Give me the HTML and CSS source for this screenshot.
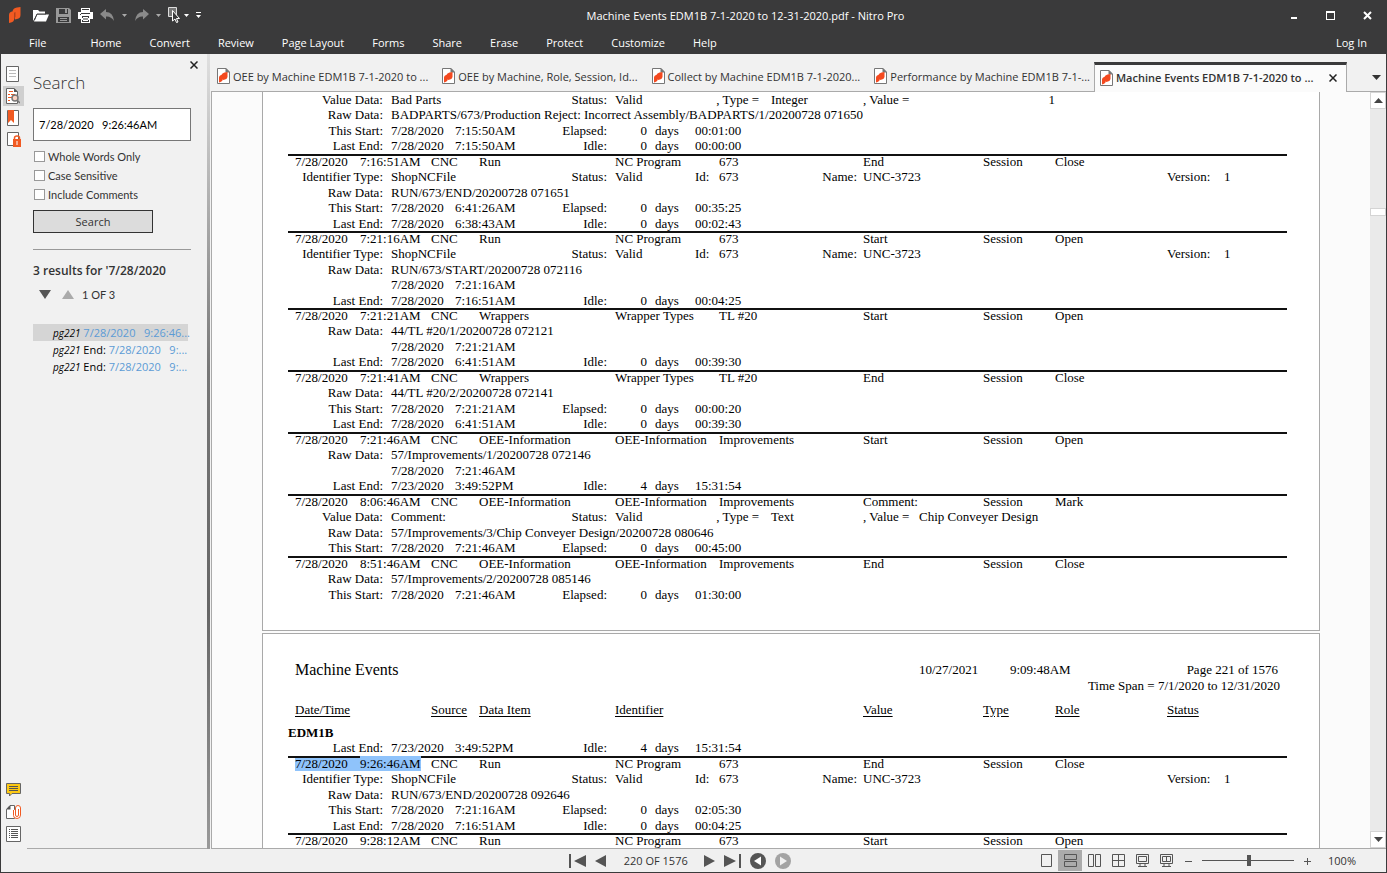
FILE: index.html
```html
<!DOCTYPE html>
<html lang="en">
<head>
    <meta charset="UTF-8">
    <meta name="viewport" content="width=device-width, initial-scale=1.0">
    <title>Machine Events EDM1B 7-1-2020 to 12-31-2020.pdf - Nitro Pro</title>
    <link rel="stylesheet" href="styles.css">
</head>

<body>
<!-- shared icon shapes -->
<svg class="defs" aria-hidden="true">
    <symbol id="logo" viewBox="0 0 12 16">
        <path d="M0 16V8Q0 5 3 4.500L5.500 4V11Q5 15 2 15.500Z" fill="#f15a22"/>
        <path d="M3.500 4.500Q4 1 8 .500L11.500 0V8Q11.500 11.500 8 12L6 12.500V6Z" fill="#f15a22"/>
        <path d="M5 6L6.500 5V10L5 11.500Z" fill="#b5401a"/>
    </symbol>
    <symbol id="pdf" viewBox="0 0 13 16">
        <path d="M.500 .500H9L12.500 4V15.500H.500Z" fill="#fff" stroke="#777"/>
        <path d="M9 0H8.500V4.500H13Z" fill="#777"/>
        <path d="M2 14.500V9.500Q2 7.500 4 7L6 6.500V11Q5.500 13.500 3.500 14Z" fill="#f4491f"/>
        <path d="M4.500 7Q5 5 7.500 4.500L10.500 4V9Q10 11 8 11.500L6 12V7.500Z" fill="#f4491f"/>
    </symbol>
</svg>

<div class="app">
    <!-- title bar -->
    <header class="top">
        <div class="titlebar">
            <svg class="logo" width="12" height="16"><use href="#logo"/></svg>
            <button class="tool open" aria-label="Open"><svg width="16" height="13" viewBox="0 0 16 13"><path d="M0 12V1H5L6.500 2.500H12V5H4Z" fill="#fff"/><path d="M4 5.500H16L13 12.500H1Z" fill="#fff"/><path d="M1.500 11L4 5H13" fill="none" stroke="#3a3a3b"/></svg></button>
            <button class="tool" aria-label="Save"><svg width="15" height="15" viewBox="0 0 15 15"><path d="M0 0H13L15 2V15H0Z" fill="#999"/><path d="M3 1H12V6H3ZM2 9H13V14H2Z" fill="#3a3a3b"/><path d="M9 1H11V5H9ZM4 10H11V11H4ZM4 12H11V13H4Z" fill="#999"/></svg></button>
            <button class="tool" aria-label="Print"><svg width="15" height="15" viewBox="0 0 15 15"><path d="M3 0H12V4H15V11H12V15H3V11H0V4H3Z" fill="#fff"/><path d="M4 1H11V4H4ZM2 6H3V7H2ZM4 8H11V14H4Z" fill="#3a3a3b"/><path d="M4 2H11V4H4ZM5 9H10V10H5ZM5 12H10V13H5ZM4 10H11V12H4Z" fill="#fff"/><path d="M3 5H12V6H3ZM5 10.500H10V11.500H5Z" fill="#3a3a3b"/></svg></button>
            <button class="tool" aria-label="Undo"><svg width="15" height="12" viewBox="0 0 15 12"><path d="M0 5L6 0V3Q13 3 14 12Q11 7 6 7.500V10.500Z" fill="#8a8a8a"/></svg></button>
            <button class="tool dim" aria-label="Undo list"><svg width="5" height="3"><path d="M0 0H5L2.500 3Z" fill="currentColor"/></svg></button>
            <button class="tool" aria-label="Redo"><svg width="15" height="12" viewBox="0 0 15 12"><path d="M15 5L9 0V3Q2 3 1 12Q4 7 9 7.500V10.500Z" fill="#8a8a8a"/></svg></button>
            <button class="tool dim" aria-label="Redo list"><svg width="5" height="3"><path d="M0 0H5L2.500 3Z" fill="currentColor"/></svg></button>
            <button class="tool select" aria-label="Select"><svg width="12" height="16" viewBox="0 0 12 16"><path d="M.500 .500H8.500V9.500H.500Z" fill="#777" stroke="#ddd"/><path d="M4.500 3.500V14L7 12L8.500 15.500L10 15L8.500 11.500H11.500Z" fill="#3a3a3b" stroke="#fff"/></svg></button>
            <button class="tool" aria-label="Select list"><svg width="5" height="3"><path d="M0 0H5L2.500 3Z" fill="currentColor"/></svg></button>
            <button class="tool" aria-label="More tools"><svg width="5" height="6"><path d="M0 0H5V1H0ZM0 3H5L2.500 6Z" fill="currentColor"/></svg></button>
            <h1>Machine Events EDM1B 7-1-2020 to 12-31-2020.pdf - Nitro Pro</h1>
            <div class="window-buttons">
                <button class="tool" aria-label="Minimize"><svg width="7" height="9"><path d="M0 6H6V8H0Z" fill="#fff"/></svg></button>
                <button class="tool" aria-label="Maximize"><svg width="9" height="9"><path d="M0 0H9V9H0ZM1 2V8H8V2Z" fill="#fff" fill-rule="evenodd"/></svg></button>
                <button class="tool" aria-label="Close"><svg width="9" height="9"><path d="M1 1L8 8M8 1L1 8" stroke="#fff" stroke-width="2"/></svg></button>
            </div>
        </div>
        <nav class="menu">
            <a class="file" href="#">File</a>
            <a href="#">Home</a>
            <a href="#">Convert</a>
            <a href="#">Review</a>
            <a href="#">Page Layout</a>
            <a href="#">Forms</a>
            <a href="#">Share</a>
            <a href="#">Erase</a>
            <a href="#">Protect</a>
            <a href="#">Customize</a>
            <a href="#">Help</a>
            <a class="login" href="#">Log In</a>
        </nav>
    </header>

    <div class="main">
        <!-- icon strip on the left -->
        <div class="strip">
            <button class="strip-btn" aria-label="Pages"><svg width="14" height="16" viewBox="0 0 14 16"><path d="M.500 .500H12.500V15.500H.500Z" fill="#fff" stroke="#666"/><path d="M3 4.500H10M3 7.500H10M3 10.500H10" stroke="#bbb"/></svg></button>
            <button class="strip-btn active" aria-label="Search"><svg width="14" height="16" viewBox="0 0 14 16"><path d="M.500 .500H8L11.500 4V15.500H.500Z" fill="#fff" stroke="#666"/><path d="M8 0V4H12Z" fill="#555"/><path d="M3 3.500H7M2 6.500H4M5 6.500H9M2 9.500H6M2 12.500H4" stroke="#f15a22"/><circle cx="9" cy="10" r="3" fill="#fbd3c3" stroke="#777" stroke-width="1.500"/><path d="M11 12L14 15" stroke="#777" stroke-width="1.500"/></svg></button>
            <button class="strip-btn" aria-label="Bookmarks"><svg width="14" height="16" viewBox="0 0 14 16"><path d="M1.500 .500H12.500V15.500H1.500Z" fill="#fff" stroke="#666"/><path d="M2 0H8V13L5 10L2 13Z" fill="#f15a22"/></svg></button>
            <button class="strip-btn" aria-label="Security"><svg width="16" height="16" viewBox="0 0 16 16"><path d="M1.500 .500H12.500V13.500H1.500Z" fill="#fff" stroke="#666"/><path d="M7 7H15V15H7Z" fill="#f15a22"/><path d="M8.500 8V6Q8.500 4 11 4Q13.500 4 13.500 6V8" fill="none" stroke="#f15a22" stroke-width="1.500"/><path d="M10.500 9H11.500V13H10.500Z" fill="#fff"/></svg></button>
            <span class="push"></span>
            <button class="strip-btn" aria-label="Comments"><svg width="16" height="14" viewBox="0 0 16 14"><path d="M.500 .500H14.500V10.500H6L3.500 13V10.500H.500Z" fill="#fdc913" stroke="#666"/><path d="M3 3.500H12M3 5.500H12M3 7.500H12" stroke="#555"/></svg></button>
            <button class="strip-btn" aria-label="Attachments"><svg width="16" height="14" viewBox="0 0 16 14"><path d="M.500 4.500L4 .500H8.500V13.500H.500Z" fill="#fff" stroke="#666"/><path d="M0 4.500H4.500V0Z" fill="#555"/><path d="M7.500 5V10.500Q7.500 13.500 11 13.500Q14.500 13.500 14.500 10V3Q14.500 .500 12 .500Q9.500 .500 9.500 3V10Q9.500 11.500 11 11.500Q12.500 11.500 12.500 10V4" fill="#fff" stroke="#f15a22"/></svg></button>
            <button class="strip-btn" aria-label="Output"><svg width="16" height="16" viewBox="0 0 16 16"><path d="M.500 .500H14.500V15.500H.500Z" fill="#fff" stroke="#666"/><path d="M3 3.500H4M5 3.500H12M3 5.500H4M5 5.500H12M3 7.500H4M5 7.500H12M3 9.500H4M5 9.500H12M3 11.500H4M5 11.500H12" stroke="#555"/></svg></button>
        </div>

        <!-- search panel -->
        <aside class="search">
            <button class="close-panel" aria-label="Close panel"><svg width="8" height="8"><path d="M.500 .500L7.500 7.500M7.500 .500L.500 7.500" stroke="#222" stroke-width="1.500"/></svg></button>
            <h2>Search</h2>
            <form class="search-form">
                <input class="query" type="text" aria-label="Search text" value="7/28/2020   9:26:46AM">
                <label class="check"><input type="checkbox"> Whole Words Only</label>
                <label class="check"><input type="checkbox"> Case Sensitive</label>
                <label class="check"><input type="checkbox"> Include Comments</label>
                <button class="search-btn" type="button">Search</button>
            </form>
            <h3>3 results for '7/28/2020</h3>
            <div class="stepper">
                <button aria-label="Next result"><svg width="12" height="9"><path d="M0 0H12L6 9Z" fill="#555"/></svg></button>
                <button aria-label="Previous result"><svg width="12" height="9"><path d="M0 9H12L6 0Z" fill="#aaa"/></svg></button>
                <span>1 OF 3</span>
            </div>
            <ul class="results">
                <li class="current"><a href="#"><i>pg221</i> <b>7/28/2020   9:26:46...</b></a></li>
                <li><a href="#"><i>pg221</i> End: <b>7/28/2020   9:...</b></a></li>
                <li><a href="#"><i>pg221</i> End: <b>7/28/2020   9:...</b></a></li>
            </ul>
        </aside>
        <div class="splitter"></div>

        <!-- documents -->
        <section class="viewer">
            <div class="tabs">
                <a class="tab" href="#"><svg width="13" height="16"><use href="#pdf"/></svg>OEE by Machine EDM1B 7-1-2020 to ...</a>
                <a class="tab" href="#"><svg width="13" height="16"><use href="#pdf"/></svg>OEE by Machine, Role, Session, Id...</a>
                <a class="tab" href="#"><svg width="13" height="16"><use href="#pdf"/></svg>Collect by Machine EDM1B 7-1-2020...</a>
                <a class="tab" href="#"><svg width="13" height="16"><use href="#pdf"/></svg>Performance by Machine EDM1B 7-1-...</a>
                <div class="tab active"><svg width="13" height="16"><use href="#pdf"/></svg>Machine Events EDM1B 7-1-2020 to ...
                    <button aria-label="Close tab"><svg width="8" height="8"><path d="M.500 .500L7.500 7.500M7.500 .500L.500 7.500" stroke="#222" stroke-width="1.500"/></svg></button>
                </div>
                <button class="tab-list" aria-label="All tabs"><svg width="9" height="5"><path d="M0 0H9L4.500 5Z" fill="#333"/></svg></button>
            </div>
            <div class="canvas">
                <div class="pages">
                    <!-- page 220 -->
                    <article class="page first">
                        <table class="report">
                            <tbody class="event">
                                <tr><td class="lab">Value Data:</td><td class="data">Bad Parts</td><td class="lab2">Status:</td><td class="ident">Valid</td><td class="ptype">, Type =</td><td class="pval">Integer</td><td class="vlab">, Value =</td><td class="amount">1</td></tr>
                                <tr><td class="lab">Raw Data:</td><td class="data">BADPARTS/673/Production Reject: Incorrect Assembly/BADPARTS/1/20200728 071650</td></tr>
                                <tr><td class="lab">This Start:</td><td class="data">7/28/2020</td><td class="time2">7:15:50AM</td><td class="lab2">Elapsed:</td><td class="num">0</td><td class="unit">days</td><td class="span">00:01:00</td></tr>
                                <tr><td class="lab">Last End:</td><td class="data">7/28/2020</td><td class="time2">7:15:50AM</td><td class="lab2">Idle:</td><td class="num">0</td><td class="unit">days</td><td class="span">00:00:00</td></tr>
                            </tbody>
                            <tbody class="event ruled">
                                <tr><td class="date">7/28/2020</td><td class="time">7:16:51AM</td><td class="src">CNC</td><td class="item">Run</td><td class="ident">NC Program</td><td class="ident2">673</td><td class="val">End</td><td class="type">Session</td><td class="role">Close</td></tr>
                                <tr><td class="lab">Identifier Type:</td><td class="data">ShopNCFile</td><td class="lab2">Status:</td><td class="ident">Valid</td><td class="span">Id:</td><td class="ident2">673</td><td class="name">Name:</td><td class="val">UNC-3723</td><td class="status">Version:</td><td class="ver">1</td></tr>
                                <tr><td class="lab">Raw Data:</td><td class="data">RUN/673/END/20200728 071651</td></tr>
                                <tr><td class="lab">This Start:</td><td class="data">7/28/2020</td><td class="time2">6:41:26AM</td><td class="lab2">Elapsed:</td><td class="num">0</td><td class="unit">days</td><td class="span">00:35:25</td></tr>
                                <tr><td class="lab">Last End:</td><td class="data">7/28/2020</td><td class="time2">6:38:43AM</td><td class="lab2">Idle:</td><td class="num">0</td><td class="unit">days</td><td class="span">00:02:43</td></tr>
                            </tbody>
                            <tbody class="event ruled">
                                <tr><td class="date">7/28/2020</td><td class="time">7:21:16AM</td><td class="src">CNC</td><td class="item">Run</td><td class="ident">NC Program</td><td class="ident2">673</td><td class="val">Start</td><td class="type">Session</td><td class="role">Open</td></tr>
                                <tr><td class="lab">Identifier Type:</td><td class="data">ShopNCFile</td><td class="lab2">Status:</td><td class="ident">Valid</td><td class="span">Id:</td><td class="ident2">673</td><td class="name">Name:</td><td class="val">UNC-3723</td><td class="status">Version:</td><td class="ver">1</td></tr>
                                <tr><td class="lab">Raw Data:</td><td class="data">RUN/673/START/20200728 072116</td></tr>
                                <tr><td class="data">7/28/2020</td><td class="time2">7:21:16AM</td></tr>
                                <tr><td class="lab">Last End:</td><td class="data">7/28/2020</td><td class="time2">7:16:51AM</td><td class="lab2">Idle:</td><td class="num">0</td><td class="unit">days</td><td class="span">00:04:25</td></tr>
                            </tbody>
                            <tbody class="event ruled">
                                <tr><td class="date">7/28/2020</td><td class="time">7:21:21AM</td><td class="src">CNC</td><td class="item">Wrappers</td><td class="ident">Wrapper Types</td><td class="ident2">TL #20</td><td class="val">Start</td><td class="type">Session</td><td class="role">Open</td></tr>
                                <tr><td class="lab">Raw Data:</td><td class="data">44/TL #20/1/20200728 072121</td></tr>
                                <tr><td class="data">7/28/2020</td><td class="time2">7:21:21AM</td></tr>
                                <tr><td class="lab">Last End:</td><td class="data">7/28/2020</td><td class="time2">6:41:51AM</td><td class="lab2">Idle:</td><td class="num">0</td><td class="unit">days</td><td class="span">00:39:30</td></tr>
                            </tbody>
                            <tbody class="event ruled">
                                <tr><td class="date">7/28/2020</td><td class="time">7:21:41AM</td><td class="src">CNC</td><td class="item">Wrappers</td><td class="ident">Wrapper Types</td><td class="ident2">TL #20</td><td class="val">End</td><td class="type">Session</td><td class="role">Close</td></tr>
                                <tr><td class="lab">Raw Data:</td><td class="data">44/TL #20/2/20200728 072141</td></tr>
                                <tr><td class="lab">This Start:</td><td class="data">7/28/2020</td><td class="time2">7:21:21AM</td><td class="lab2">Elapsed:</td><td class="num">0</td><td class="unit">days</td><td class="span">00:00:20</td></tr>
                                <tr><td class="lab">Last End:</td><td class="data">7/28/2020</td><td class="time2">6:41:51AM</td><td class="lab2">Idle:</td><td class="num">0</td><td class="unit">days</td><td class="span">00:39:30</td></tr>
                            </tbody>
                            <tbody class="event ruled">
                                <tr><td class="date">7/28/2020</td><td class="time">7:21:46AM</td><td class="src">CNC</td><td class="item">OEE-Information</td><td class="ident">OEE-Information</td><td class="ident2">Improvements</td><td class="val">Start</td><td class="type">Session</td><td class="role">Open</td></tr>
                                <tr><td class="lab">Raw Data:</td><td class="data">57/Improvements/1/20200728 072146</td></tr>
                                <tr><td class="data">7/28/2020</td><td class="time2">7:21:46AM</td></tr>
                                <tr><td class="lab">Last End:</td><td class="data">7/23/2020</td><td class="time2">3:49:52PM</td><td class="lab2">Idle:</td><td class="num">4</td><td class="unit">days</td><td class="span">15:31:54</td></tr>
                            </tbody>
                            <tbody class="event ruled">
                                <tr><td class="date">7/28/2020</td><td class="time">8:06:46AM</td><td class="src">CNC</td><td class="item">OEE-Information</td><td class="ident">OEE-Information</td><td class="ident2">Improvements</td><td class="val">Comment:</td><td class="type">Session</td><td class="role">Mark</td></tr>
                                <tr><td class="lab">Value Data:</td><td class="data">Comment:</td><td class="lab2">Status:</td><td class="ident">Valid</td><td class="ptype">, Type =</td><td class="pval">Text</td><td class="vlab">, Value =</td><td class="vtext">Chip Conveyer Design</td></tr>
                                <tr><td class="lab">Raw Data:</td><td class="data">57/Improvements/3/Chip Conveyer Design/20200728 080646</td></tr>
                                <tr><td class="lab">This Start:</td><td class="data">7/28/2020</td><td class="time2">7:21:46AM</td><td class="lab2">Elapsed:</td><td class="num">0</td><td class="unit">days</td><td class="span">00:45:00</td></tr>
                            </tbody>
                            <tbody class="event ruled">
                                <tr><td class="date">7/28/2020</td><td class="time">8:51:46AM</td><td class="src">CNC</td><td class="item">OEE-Information</td><td class="ident">OEE-Information</td><td class="ident2">Improvements</td><td class="val">End</td><td class="type">Session</td><td class="role">Close</td></tr>
                                <tr><td class="lab">Raw Data:</td><td class="data">57/Improvements/2/20200728 085146</td></tr>
                                <tr><td class="lab">This Start:</td><td class="data">7/28/2020</td><td class="time2">7:21:46AM</td><td class="lab2">Elapsed:</td><td class="num">0</td><td class="unit">days</td><td class="span">01:30:00</td></tr>
                            </tbody>
                        </table>
                    </article>

                    <!-- page 221 -->
                    <article class="page">
                        <div class="page-head">
                            <h2>Machine Events</h2>
                            <span>10/27/2021</span>
                            <span>9:09:48AM</span>
                            <span class="page-no">Page 221 of 1576</span>
                        </div>
                        <p class="time-span">Time Span = 7/1/2020 to 12/31/2020</p>
                        <table class="report">
                            <thead>
                                <tr><th class="date">Date/Time</th><th class="src">Source</th><th class="item">Data Item</th><th class="ident">Identifier</th><th class="val">Value</th><th class="type">Type</th><th class="role">Role</th><th class="status">Status</th></tr>
                            </thead>
                            <tbody class="event">
                                <tr class="machine"><th>EDM1B</th></tr>
                                <tr><td class="lab">Last End:</td><td class="data">7/23/2020</td><td class="time2">3:49:52PM</td><td class="lab2">Idle:</td><td class="num">4</td><td class="unit">days</td><td class="span">15:31:54</td></tr>
                            </tbody>
                            <tbody class="event ruled">
                                <tr><td class="date hit">7/28/2020</td><td class="time"><mark>9:26:46AM</mark></td><td class="src">CNC</td><td class="item">Run</td><td class="ident">NC Program</td><td class="ident2">673</td><td class="val">End</td><td class="type">Session</td><td class="role">Close</td></tr>
                                <tr><td class="lab">Identifier Type:</td><td class="data">ShopNCFile</td><td class="lab2">Status:</td><td class="ident">Valid</td><td class="span">Id:</td><td class="ident2">673</td><td class="name">Name:</td><td class="val">UNC-3723</td><td class="status">Version:</td><td class="ver">1</td></tr>
                                <tr><td class="lab">Raw Data:</td><td class="data">RUN/673/END/20200728 092646</td></tr>
                                <tr><td class="lab">This Start:</td><td class="data">7/28/2020</td><td class="time2">7:21:16AM</td><td class="lab2">Elapsed:</td><td class="num">0</td><td class="unit">days</td><td class="span">02:05:30</td></tr>
                                <tr><td class="lab">Last End:</td><td class="data">7/28/2020</td><td class="time2">7:16:51AM</td><td class="lab2">Idle:</td><td class="num">0</td><td class="unit">days</td><td class="span">00:04:25</td></tr>
                            </tbody>
                            <tbody class="event ruled">
                                <tr><td class="date">7/28/2020</td><td class="time">9:28:12AM</td><td class="src">CNC</td><td class="item">Run</td><td class="ident">NC Program</td><td class="ident2">673</td><td class="val">Start</td><td class="type">Session</td><td class="role">Open</td></tr>
                            </tbody>
                        </table>
                    </article>
                </div>
                <!-- scroll bar -->
                <div class="scroll">
                    <button aria-label="Scroll up"><svg width="9" height="5"><path d="M0 5H9L4.500 0Z" fill="#444"/></svg></button>
                    <div class="track"><div class="thumb"></div></div>
                    <button aria-label="Scroll down"><svg width="9" height="5"><path d="M0 0H9L4.500 5Z" fill="#444"/></svg></button>
                </div>
            </div>
        </section>
    </div>

    <!-- status bar -->
    <footer class="status-bar">
        <div class="pager">
            <button aria-label="First page"><svg width="17" height="14"><path d="M0 0H2V14H0ZM17 1V13L5 7Z" fill="#555"/></svg></button>
            <button aria-label="Previous page"><svg width="12" height="14"><path d="M11 1V13L0 7Z" fill="#555"/></svg></button>
            <span>220 OF 1576</span>
            <button aria-label="Next page"><svg width="12" height="14"><path d="M1 1V13L12 7Z" fill="#555"/></svg></button>
            <button aria-label="Last page"><svg width="17" height="14"><path d="M15 0H17V14H15ZM0 1V13L12 7Z" fill="#555"/></svg></button>
            <button aria-label="Back"><svg width="16" height="16"><circle cx="8" cy="8" r="8" fill="#555"/><path d="M11 3.500V12.500L4 8Z" fill="#fff"/></svg></button>
            <button aria-label="Forward"><svg width="16" height="16"><circle cx="8" cy="8" r="8" fill="#a3a3a3"/><path d="M5 3.500V12.500L12 8Z" fill="#f0f0f0"/></svg></button>
        </div>
        <div class="views">
            <button aria-label="Single page"><svg width="13" height="13"><path d="M1.500 .500H11.500V12.500H1.500Z"/></svg></button>
            <button class="on" aria-label="Continuous"><svg width="13" height="13"><path d="M.500 .500H12.500V5.500H.500ZM.500 7.500H12.500V12.500H.500Z"/></svg></button>
            <button aria-label="Facing"><svg width="13" height="13"><path d="M.500 .500H5.500V12.500H.500ZM7.500 .500H12.500V12.500H7.500Z"/></svg></button>
            <button aria-label="Continuous facing"><svg width="13" height="13"><path d="M.500 .500H12.500V12.500H.500ZM6.500 0V13M0 6.500H13"/></svg></button>
            <button aria-label="Full screen"><svg width="13" height="13"><path d="M.500 .500H12.500V9.500H.500ZM2.500 2.500H10.500V7.500H2.500ZM4 9.500V12M9 9.500V12M2 12.500H11"/></svg></button>
            <button aria-label="Full screen facing"><svg width="13" height="13"><path d="M.500 .500H12.500V9.500H.500ZM2.500 2.500H10.500V7.500H2.500ZM6.500 2V8M4 9.500V12M9 9.500V12M2 12.500H11"/></svg></button>
        </div>
        <div class="zoom">
            <button aria-label="Zoom out"><svg width="8" height="8"><path d="M0 4.500H7" stroke="#555"/></svg></button>
            <input type="range" aria-label="Zoom" min="0" max="100" value="51">
            <button aria-label="Zoom in"><svg width="8" height="8"><path d="M0 4.500H7M3.500 1V8" stroke="#555"/></svg></button>
            <output>100%</output>
        </div>
    </footer>
</div>
</body>
</html>
```
FILE: styles.css
```css
* {
    box-sizing: border-box;
}

body {
    margin: 0;
    font-family: "Open Sans", "Noto Sans", sans-serif;
    font-size: 11px;
    color: #333;
}

button {
    border: 0;
    padding: 0;
    background: none;
    font: inherit;
    color: inherit;
}

a {
    color: inherit;
    text-decoration: none;
}

svg {
    display: block;
    flex: none;
}

.defs {
    position: absolute;
    width: 0;
    height: 0;
}

.app {
    display: flex;
    flex-direction: column;
    height: 100vh;
    border: 1px solid #3a3a3b;
    border-top: 0;
    background: #f1f1f1;
    overflow: hidden;
}

/* title bar and menu */
.top {
    height: 54px;
    flex: none;
    background: #3a3a3b;
    color: #fff;
}

.titlebar {
    display: flex;
    align-items: center;
    height: 30px;
    padding: 0 14px 0 8px;
}

.tool {
    margin-right: 7px;
}

.logo {
    margin-right: 12px;
}

.dim {
    color: #aaa;
}

.select {
    margin-right: 4px;
}

.titlebar h1 {
    flex: 1;
    margin: 0;
    padding-right: 8px;
    font-size: 11px;
    font-weight: normal;
    text-align: center;
}

.window-buttons {
    display: flex;
    gap: 28px;
}

.window-buttons .tool {
    margin: 0;
}

.menu {
    display: flex;
    align-items: center;
    height: 24px;
    gap: 28px;
    padding: 1px 19px 0 28px;
}

.menu .file {
    margin-right: 16px;
}

.menu .login {
    margin-left: auto;
}

.main {
    display: flex;
    flex: 1;
    min-height: 0;
}

/* icon strip */
.strip {
    display: flex;
    flex-direction: column;
    gap: 2px;
    width: 26px;
    padding: 10px 2px 5px;
}

.strip-btn {
    display: flex;
    align-items: center;
    width: 21px;
    height: 20px;
    padding-left: 3px;
}

.strip-btn.active {
    background: #cfcfcf;
}

.push {
    flex: 1;
}

/* search panel */
.search {
    width: 180px;
    padding: 5px 16px 0 6px;
    border-bottom: 1px solid #aaa;
}

.close-panel {
    display: block;
    padding: 2px;
    margin: 0 -9px 0 auto;
}

.search h2 {
    margin: 0 0 13px;
    font-size: 17px;
    font-weight: 300;
    line-height: 24px;
}

.query {
    display: block;
    width: 100%;
    height: 33px;
    margin-bottom: 6px;
    padding: 0 5px;
    border: 1px solid #777;
    background: #fff;
    font-family: Lato, sans-serif;
    font-size: 11px;
    color: #000;
}

.check {
    display: flex;
    align-items: center;
    gap: 3px;
    height: 19px;
    padding-left: 1px;
    font-family: Lato, sans-serif;
}

.check input {
    appearance: none;
    width: 11px;
    height: 11px;
    margin: 0;
    border: 1px solid #999;
    background: #fff;
}

.search-btn {
    display: block;
    width: 120px;
    height: 23px;
    margin-top: 6px;
    border: 1px solid #333;
    background: #dcdcdc;
}

.search-form {
    padding-bottom: 16px;
    border-bottom: 1px solid #999;
}

.search h3 {
    margin: 12px 0 6px;
    font-size: 12px;
    font-weight: 600;
    line-height: 18px;
}

.stepper {
    display: flex;
    align-items: center;
    gap: 11px;
    height: 16px;
    padding-left: 6px;
}

.stepper span {
    margin-left: -3px;
    font-family: Lato, sans-serif;
}

.results {
    margin: 22px 3px 0 0;
    padding: 0;
    list-style: none;
    color: #000;
}

.results li {
    height: 17px;
    padding-left: 20px;
    line-height: 17px;
    white-space: pre;
}

.results .current {
    background: #d5d5d5;
}

.results i {
    font-size: 10px;
}

.results b {
    font-weight: normal;
    color: #5b9bd5;
}

.splitter {
    width: 3px;
    margin-right: 1px;
    background: linear-gradient(#e0e0e0, #777 40%, #666 70%, #999);
}

/* document tabs */
.viewer {
    display: flex;
    flex: 1;
    flex-direction: column;
    min-width: 0;
}

.tabs {
    display: flex;
    align-items: flex-end;
    height: 38px;
    padding-left: 6px;
    box-shadow: inset 0 -1px #aaa;
}

.tab {
    display: flex;
    align-items: center;
    gap: 3px;
    height: 30px;
    padding-bottom: 2px;
    margin-right: 14px;
    white-space: nowrap;
}

.tab.active {
    margin: 0 0 0 -10px;
    padding: 0 9px 2px 5px;
    border: 1px solid #aaa;
    border-top: 3px solid #3a3a3b;
    border-bottom: 0;
    background: #fbfbfb;
    font-weight: 600;
}

.tab.active button {
    margin-left: 13px;
}

.tab-list {
    margin: 0 5px 12px auto;
}

/* pages */
.canvas {
    display: flex;
    flex: 1;
    min-height: 0;
    border-left: 1px solid #aaa;
    border-bottom: 1px solid #aaa;
    background: #fbfbfb;
}

.pages {
    flex: 1;
    overflow: hidden;
    font-family: "Liberation Serif", "Times New Roman", serif;
    font-size: 13px;
    color: #000;
}

.page {
    width: 1058px;
    margin: 0 auto 2px;
    padding: 28px 32px 28px 25px;
    border: 1px solid #a9a9a9;
    background: #fff;
}

.page.first {
    padding-top: 0;
    border-top: 0;
}

.report,
.report thead,
.report tbody {
    display: block;
}

/* one column track for every field edge in the report */
.report tr {
    display: grid;
    grid-template-columns: 7px 65px 23px 8px 40px 24px 24px 128px 8px 32px 8px 40px 24px 52px 86px 6px 56px 64px 72px 112px 57px 1fr;
    height: 15px;
    line-height: 15px;
}

.report td,
.report th {
    padding: 0;
    grid-row: 1;
    font-weight: normal;
    text-align: left;
    white-space: nowrap;
}

.event tr:nth-child(even) {
    height: 16px;
    line-height: 16px;
}

.ruled {
    border-top: 2px solid #111;
}

.event.ruled tr:first-child {
    height: 13px;
    line-height: 12px;
}

.report .date { grid-column: 2; }
.report .time { grid-column: 3 / 6; }
.report .lab { grid-column: 1 / 4; text-align: right; }
.report .data { grid-column: 5; }
.report .src { grid-column: 6; }
.report .time2 { grid-column: 7; }
.report .item { grid-column: 8; }
.report .lab2 { grid-column: 8; text-align: right; }
.report .ident { grid-column: 10; }
.report .num { grid-column: 10; text-align: right; }
.report .unit { grid-column: 12; }
.report .span { grid-column: 13; }
.report .ident2 { grid-column: 14; }
.report .ptype { grid-column: 14; padding-right: 12px; direction: ltr; justify-self: end; }
.report .pval { grid-column: 15; }
.report .name { grid-column: 15; text-align: right; }
.report .val { grid-column: 17; }
.report .vlab { grid-column: 17; }
.report .vtext { grid-column: 18; }
.report .type { grid-column: 19; }
.report .amount { grid-column: 19; text-align: right; }
.report .role { grid-column: 20; }
.report .status { grid-column: 21; }
.report .ver { grid-column: 22; }

.hit,
mark {
    background: #8fc3fb;
    color: #000;
}

.report thead {
    padding: 8px 0;
}

.report thead th {
    text-decoration: underline;
    text-underline-offset: 2px;
}

.report .machine th {
    grid-column: 1;
    font-weight: bold;
}

.page-head {
    display: grid;
    grid-template-columns: 624px 91px 1fr auto;
    align-items: center;
    height: 16px;
    padding: 0 9px 0 7px;
}

.page-head h2 {
    margin: 0;
    font-size: 16px;
    font-weight: normal;
    line-height: 16px;
}

.time-span {
    margin: 0;
    padding-right: 7px;
    line-height: 16px;
    text-align: right;
}

/* scroll bar */
.scroll {
    display: flex;
    flex-direction: column;
    width: 16px;
    background: #eaeaea;
}

.scroll button {
    display: flex;
    align-items: center;
    justify-content: center;
    height: 17px;
    border: 1px solid #d4d4d4;
    background: #fff;
}

.track {
    flex: 1;
    padding-top: 99px;
}

.thumb {
    height: 8px;
    border: 1px solid #d4d4d4;
    background: #fff;
}

/* status bar */
.status-bar {
    display: flex;
    align-items: center;
    height: 23px;
    flex: none;
    background: #f0f0f0;
}

.status-bar::before {
    content: "";
    flex: 7;
}

.pager {
    display: flex;
    flex: 3 0 auto;
    align-items: center;
    gap: 9px;
}

.pager span {
    padding: 0 6px 0 8px;
}

.views {
    display: flex;
    height: 21px;
}

.views button {
    display: flex;
    align-items: center;
    justify-content: center;
    width: 24px;
}

.views .on {
    background: #ababab;
}

.views path {
    fill: none;
    stroke: #555;
}

.zoom {
    display: flex;
    align-items: center;
    padding: 0 30px 0 7px;
}

.zoom input {
    appearance: none;
    width: 92px;
    height: 11px;
    margin: 0 10px 0 9px;
    background: linear-gradient(#555, #555) center / 100% 1px no-repeat;
}

.zoom input::-webkit-slider-thumb {
    appearance: none;
    width: 4px;
    height: 11px;
    background: #555;
}

.zoom output {
    margin-left: 16px;
}
```
